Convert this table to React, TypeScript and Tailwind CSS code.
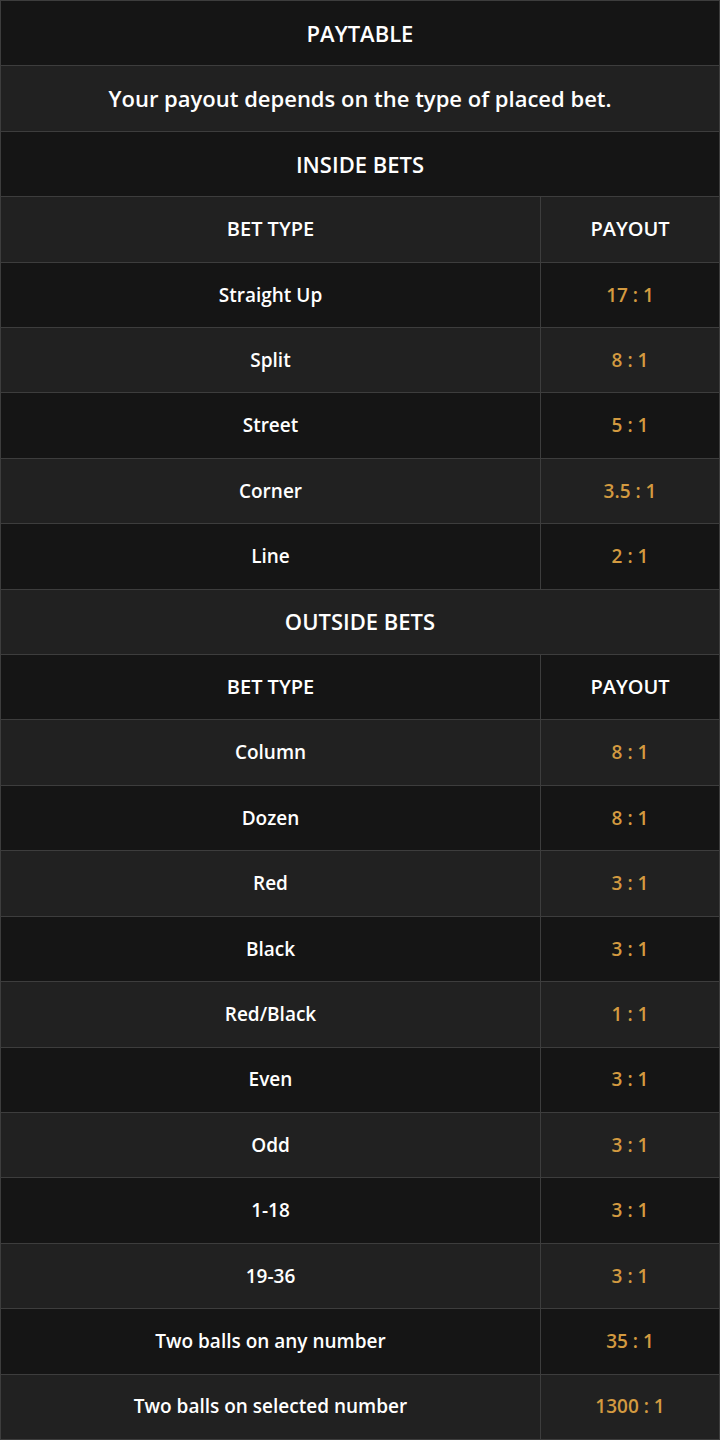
const inside = [
  ["Straight Up", "17 : 1"],
  ["Split", "8 : 1"],
  ["Street", "5 : 1"],
  ["Corner", "3.5 : 1"],
  ["Line", "2 : 1"],
]

const outside = [
  ["Column", "8 : 1"],
  ["Dozen", "8 : 1"],
  ["Red", "3 : 1"],
  ["Black", "3 : 1"],
  ["Red/Black", "1 : 1"],
  ["Even", "3 : 1"],
  ["Odd", "3 : 1"],
  ["1-18", "3 : 1"],
  ["19-36", "3 : 1"],
  ["Two balls on any number", "35 : 1"],
  ["Two balls on selected number", "1300 : 1"],
]

const dark = "bg-[#151515]"
const light = "bg-[#212121]"

function FullRow({ text, bg, size }: { text: string; bg: string; size: string }) {
  return (
    <div className={`flex-1 flex items-center justify-center border-b border-[#3d3d3d] ${bg}`}>
      <span className={`${size} font-semibold text-white`}>{text}</span>
    </div>
  )
}

function BetRow({ left, right, bg, header }: { left: string; right: string; bg: string; header?: boolean }) {
  const size = header ? "text-[20px]" : "text-[19px]"
  return (
    <div className={`flex-1 flex border-b border-[#3d3d3d] ${bg}`}>
      <div className="w-[540px] flex items-center justify-center border-r border-[#3d3d3d]">
        <span className={`${size} font-semibold text-white`}>{left}</span>
      </div>
      <div className="flex-1 flex items-center justify-center">
        <span className={`${size} font-semibold ${header ? "text-white" : "text-[#d39a40]"}`}>{right}</span>
      </div>
    </div>
  )
}

export default function App() {
  // rows alternate dark/light straight down the table
  let i = 0
  const next = () => (i++ % 2 === 0 ? dark : light)
  return (
    <div
      className="h-[1440px] w-[720px] flex flex-col border-x border-t border-[#3d3d3d] bg-[#151515]"
      style={{ fontFamily: "'Open Sans', 'Noto Sans', sans-serif" }}
    >
      <FullRow text="PAYTABLE" bg={next()} size="text-[22px]" />
      <FullRow text="Your payout depends on the type of placed bet." bg={next()} size="text-[22px]" />
      <FullRow text="INSIDE BETS" bg={next()} size="text-[22px]" />
      <BetRow left="BET TYPE" right="PAYOUT" bg={next()} header />
      {inside.map(([a, b]) => (
        <BetRow key={a} left={a} right={b} bg={next()} />
      ))}
      <FullRow text="OUTSIDE BETS" bg={next()} size="text-[22px]" />
      <BetRow left="BET TYPE" right="PAYOUT" bg={next()} header />
      {outside.map(([a, b]) => (
        <BetRow key={a} left={a} right={b} bg={next()} />
      ))}
    </div>
  )
}
